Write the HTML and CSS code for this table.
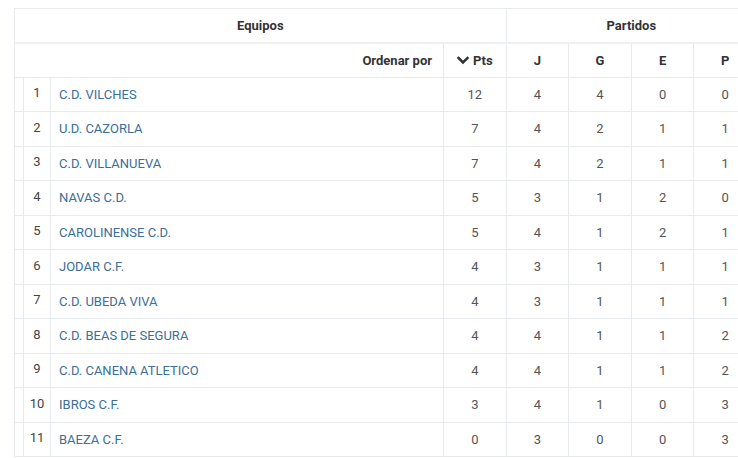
FILE: index.html
```html
<!DOCTYPE html>
<html lang="es">
<head>
<meta charset="utf-8">
<link rel="stylesheet" href="styles.css">
</head>
<body>
<div class="wrap">
<table class="clasif">
  <colgroup>
    <col class="c-gap"><col class="c-pos"><col class="c-team"><col class="c-num"><col class="c-num"><col class="c-num"><col class="c-num"><col class="c-num">
  </colgroup>
  <thead>
    <tr class="h1">
      <th colspan="4">Equipos</th>
      <th colspan="4">Partidos</th>
    </tr>
    <tr class="h2">
      <th colspan="3" class="order">Ordenar por</th>
      <th class="pts"><svg class="chev" width="12" height="9" viewBox="0 0 12 9"><polyline points="1.5,2 6,6.5 10.5,2" fill="none" stroke="#333" stroke-width="2.6" stroke-linecap="square"/></svg>Pts</th>
      <th>J</th><th>G</th><th>E</th><th>P</th>
    </tr>
  </thead>
  <tbody>
    <tr><td></td><td class="pos">1</td><td class="team">C.D. VILCHES</td><td>12</td><td>4</td><td>4</td><td>0</td><td>0</td></tr>
    <tr><td></td><td class="pos">2</td><td class="team">U.D. CAZORLA</td><td>7</td><td>4</td><td>2</td><td>1</td><td>1</td></tr>
    <tr><td></td><td class="pos">3</td><td class="team">C.D. VILLANUEVA</td><td>7</td><td>4</td><td>2</td><td>1</td><td>1</td></tr>
    <tr><td></td><td class="pos">4</td><td class="team">NAVAS C.D.</td><td>5</td><td>3</td><td>1</td><td>2</td><td>0</td></tr>
    <tr><td></td><td class="pos">5</td><td class="team">CAROLINENSE C.D.</td><td>5</td><td>4</td><td>1</td><td>2</td><td>1</td></tr>
    <tr><td></td><td class="pos">6</td><td class="team">JODAR C.F.</td><td>4</td><td>3</td><td>1</td><td>1</td><td>1</td></tr>
    <tr><td></td><td class="pos">7</td><td class="team">C.D. UBEDA VIVA</td><td>4</td><td>3</td><td>1</td><td>1</td><td>1</td></tr>
    <tr><td></td><td class="pos">8</td><td class="team">C.D. BEAS DE SEGURA</td><td>4</td><td>4</td><td>1</td><td>1</td><td>2</td></tr>
    <tr><td></td><td class="pos">9</td><td class="team">C.D. CANENA ATLETICO</td><td>4</td><td>4</td><td>1</td><td>1</td><td>2</td></tr>
    <tr><td></td><td class="pos">10</td><td class="team">IBROS C.F.</td><td>3</td><td>4</td><td>1</td><td>0</td><td>3</td></tr>
    <tr><td></td><td class="pos">11</td><td class="team">BAEZA C.F.</td><td>0</td><td>3</td><td>0</td><td>0</td><td>3</td></tr>
  </tbody>
</table>
</div>
</body>
</html>
```
FILE: styles.css
```css
html, body {
  margin: 0;
  overflow: hidden;
  background: #fff;
}
body {
  font-family: Roboto, "Liberation Sans", sans-serif;
  font-size: 13px;
  color: #555;
}
.wrap {
  padding: 8px 0 0 14px;
  width: 760px;
}
.clasif {
  border-collapse: collapse;
  table-layout: fixed;
  width: 742px;
  border: 1px solid #e8ebee;
}
.c-gap { width: 9px; }
.c-pos { width: 27px; }
.c-team { width: 393px; }
.c-num { width: 62.6px; }
.clasif th, .clasif td {
  border: 1px solid #e8ebee;
  line-height: 18px;
  padding: 7.75px 8px;
  text-align: center;
  white-space: nowrap;
  overflow: hidden;
}
.clasif th {
  color: #333;
  font-weight: 700;
}
.h1 th {
  border-bottom: 2px solid #eef0f2;
  padding-top: 8.2px;
  padding-bottom: 7.2px;
}
.h2 th { padding-top: 7.3px; padding-bottom: 7.2px; }
.clasif th.order {
  text-align: right;
  padding-right: 11px;
}
.pts .chev {
  margin-right: 4px;
  vertical-align: 0px;
}
.clasif td.pos {
  color: #444;
  padding: 6.2px 0 9.3px;
  vertical-align: middle;
}
.clasif td.team {
  text-align: left;
  color: #3b6e98;
  padding-left: 8px;
}
```
